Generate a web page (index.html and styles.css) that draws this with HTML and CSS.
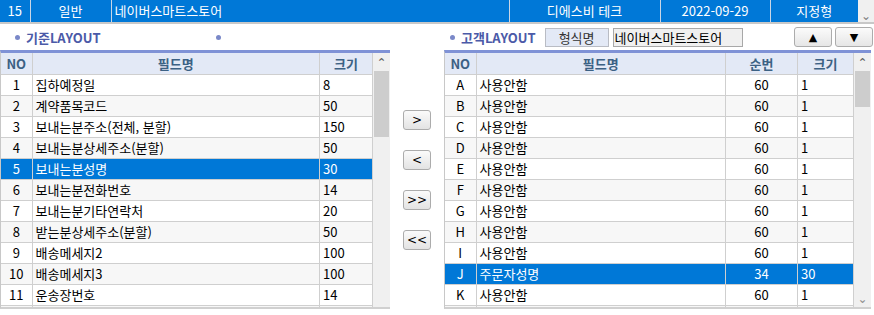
FILE: index.html
```html
<!DOCTYPE html>
<html lang="ko">
<head>
  <meta charset="UTF-8" />
  <title>레이아웃 설정</title>
  <link rel="stylesheet" href="styles.css">
</head>
<body>

  <div class="top-bar">
    <table class="top-grid">
      <tr>
        <td class="c-no">15</td>
        <td class="c-type">일반</td>
        <td class="c-name">네이버스마트스토어</td>
        <td class="c-comp">디에스비 테크</td>
        <td class="c-date">2022-09-29</td>
        <td class="c-kind">지정형</td>
      </tr>
    </table>
    <div class="top-scroll"><span class="chev">&#8964;</span></div>
  </div>

  <div class="workspace">
    <div class="panel left-panel">
      <div class="panel-head">
        <span class="bullet"></span><span class="title">기준LAYOUT</span>
        <span class="bullet spacer-dot"></span>
      </div>
      <div class="grid-wrap">
        <table class="grid">
          <colgroup><col class="w-no"><col><col class="w-size"></colgroup>
          <thead>
            <tr><th>NO</th><th>필드명</th><th>크기</th></tr>
          </thead>
          <tbody id="leftRows"></tbody>
        </table>
        <div class="vscroll"><span class="up">&#8963;</span><div class="thumb"></div></div>
      </div>
    </div>

    <div class="mover">
      <button class="mv-btn">&gt;</button>
      <button class="mv-btn">&lt;</button>
      <button class="mv-btn">&gt;&gt;</button>
      <button class="mv-btn">&lt;&lt;</button>
    </div>

    <div class="panel right-panel">
      <div class="panel-head">
        <span class="bullet"></span><span class="title">고객LAYOUT</span>
        <span class="form-label">형식명</span>
        <span class="form-value">네이버스마트스토어</span>
        <div class="order-btns">
          <button class="ord-btn">▲</button>
          <button class="ord-btn">▼</button>
        </div>
      </div>
      <div class="grid-wrap">
        <table class="grid">
          <colgroup><col class="w-no"><col><col class="w-seq"><col class="w-size2"></colgroup>
          <thead>
            <tr><th>NO</th><th>필드명</th><th>순번</th><th>크기</th></tr>
          </thead>
          <tbody id="rightRows"></tbody>
        </table>
        <div class="vscroll"><span class="up">&#8963;</span><div class="thumb short"></div><span class="down">&#8964;</span></div>
      </div>
    </div>
  </div>

  <script>
    const leftData = [
      ['1', '집하예정일', '8'],
      ['2', '계약품목코드', '50'],
      ['3', '보내는분주소(전체, 분할)', '150'],
      ['4', '보내는분상세주소(분할)', '50'],
      ['5', '보내는분성명', '30', true],
      ['6', '보내는분전화번호', '14'],
      ['7', '보내는분기타연락처', '20'],
      ['8', '받는분상세주소(분할)', '50'],
      ['9', '배송메세지2', '100'],
      ['10', '배송메세지3', '100'],
      ['11', '운송장번호', '14'],
      ['', '', '']
    ];
    const rightData = 'ABCDEFGHIJK'.split('').map(ch =>
      ch === 'J' ? [ch, '주문자성명', '34', '30', true] : [ch, '사용안함', '60', '1']
    );
    rightData.push(['', '', '', '']);

    function fill(id, rows, classes) {
      const body = document.getElementById(id);
      rows.forEach(r => {
        const tr = document.createElement('tr');
        if (r[r.length - 1] === true) tr.className = 'sel';
        classes.forEach((cls, i) => {
          const td = document.createElement('td');
          td.className = cls;
          td.textContent = r[i];
          tr.appendChild(td);
        });
        body.appendChild(tr);
      });
    }
    fill('leftRows', leftData, ['center', '', '']);
    fill('rightRows', rightData, ['center', '', 'center', '']);
  </script>
</body>
</html>
```

FILE: styles.css
```css
* {
  margin: 0;
  padding: 0;
  box-sizing: border-box;
}

body {
  width: 874px;
  height: 315px;
  overflow: hidden;
  background: #fff;
  font-family: 'Noto Sans CJK KR', 'DejaVu Sans', sans-serif;
  font-size: 13px;
  color: #000;
}

/* top record line */
.top-bar {
  display: flex;
  height: 24px;
  border-bottom: 2px solid #c8c8c8;
}

.top-grid {
  border-collapse: collapse;
  width: 858px;
  height: 22px;
  table-layout: fixed;
  background: #0078d7;
  color: #fff;
}

.top-grid td {
  border-right: 1px solid #c9d6e6;
  padding: 0 3px;
  line-height: 20px;
  white-space: nowrap;
  text-align: center;
}

.c-no { width: 30px; }
.c-type { width: 81px; }
.c-name { width: 398px; text-align: left !important; }
.c-comp { width: 151px; }
.c-date { width: 110px; }
.c-kind { width: 88px; border-right: none !important; }

.top-scroll {
  width: 16px;
  background: #f0f0f0;
  display: flex;
  align-items: flex-end;
  justify-content: center;
}

.chev {
  color: #808080;
  font-size: 12px;
  line-height: 14px;
}

/* panels */
.workspace {
  display: flex;
}

.panel-head {
  height: 26px;
  display: flex;
  align-items: center;
}

.bullet {
  width: 5px;
  height: 5px;
  border-radius: 50%;
  background: #7a88c8;
  margin: 0 6px 0 0;
}

.title {
  font-weight: bold;
  color: #4b5aa8;
  font-size: 13px;
}

.left-panel {
  width: 390px;
}

.left-panel .panel-head {
  padding-left: 15px;
}

.spacer-dot {
  margin-left: 115px;
}

.right-panel {
  width: 427px;
}

.right-panel .panel-head {
  padding-left: 6px;
}

.form-label {
  margin-left: 9px;
  width: 64px;
  height: 19px;
  line-height: 17px;
  text-align: center;
  background: #e3e9f6;
  border: 1px solid #b9bcc4;
  color: #333;
}

.form-value {
  margin-left: 4px;
  width: 130px;
  height: 19px;
  line-height: 17px;
  padding-left: 1px;
  background: #f0f0f0;
  border: 1px solid #a8a8a8;
}

.order-btns {
  margin-left: auto;
  display: flex;
  gap: 3px;
  margin-right: -2px;
}

.ord-btn {
  width: 38px;
  height: 20px;
  font-size: 11px;
  border: 1px solid #acacac;
  border-radius: 3px;
  background: linear-gradient(#fbfbfb, #e6e6e6);
  color: #000;
  font-family: 'DejaVu Sans', sans-serif;
}

/* data grids */
.grid-wrap {
  display: flex;
  border-top: 3px solid #7f92d6;
  border-left: 1px solid #c8c8c8;
  border-bottom: 2px solid #d0d0d0;
  height: 259px;
  overflow: hidden;
}

.grid {
  flex: 1;
  border-collapse: collapse;
  table-layout: fixed;
  align-self: flex-start;
}

.w-no { width: 31px; }
.w-size { width: 53px; }
.w-seq { width: 72px; }
.w-size2 { width: 56px; }

.grid th {
  height: 21px;
  background: #e3e9f6;
  color: #3c6184;
  font-weight: bold;
  border-right: 1px solid #cfcfcf;
  border-bottom: 1px solid #cfcfcf;
}

.grid td {
  height: 21px;
  padding: 0 3px;
  line-height: 19px;
  border-right: 1px solid #cfcfcf;
  border-bottom: 1px solid #cfcfcf;
  white-space: nowrap;
  overflow: hidden;
}

.grid td.center {
  text-align: center;
}

.grid tbody tr:nth-child(even) td {
  background: #f7f7f7;
}

.grid tbody tr.sel td {
  background: #0078d7;
  color: #fff;
}

.vscroll {
  width: 17px;
  background: #f0f0f0;
  display: flex;
  flex-direction: column;
  align-items: center;
}

.up,
.down {
  color: #606060;
  font-size: 12px;
  line-height: 18px;
  height: 18px;
}

.down {
  margin-top: auto;
  color: #909090;
}

.thumb {
  width: 15px;
  height: 66px;
  background: #cdcdcd;
}

.thumb.short {
  height: 36px;
}

/* move buttons */
.mover {
  width: 54px;
  display: flex;
  flex-direction: column;
  align-items: center;
  gap: 20px;
  padding-top: 86px;
}

.mv-btn {
  width: 28px;
  height: 20px;
  font-size: 12px;
  border: 1px solid #acacac;
  border-radius: 3px;
  background: linear-gradient(#fbfbfb, #e3e3e3);
  color: #000;
  font-family: 'DejaVu Sans', sans-serif;
}
```
